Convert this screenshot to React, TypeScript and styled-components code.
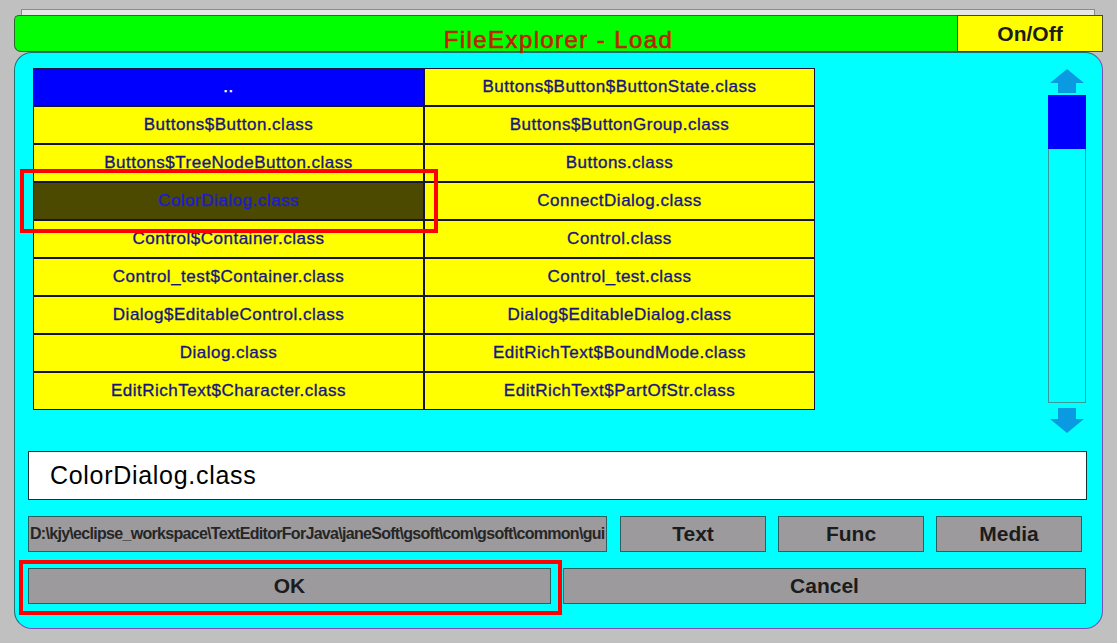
import React from "react";
import styled, { createGlobalStyle } from "styled-components";

const Global = createGlobalStyle`
  html, body {
    margin: 0;
    padding: 0;
    background: #c0c0c0;
    width: 1117px;
    height: 643px;
    overflow: hidden;
    font-family: "Liberation Sans", Arial, sans-serif;
  }
  * { box-sizing: border-box; }
`;

const Desktop = styled.div`
  width: 1117px;
  height: 643px;
  padding-top: 9px;
  display: flex;
  flex-direction: column;
`;

const BackWindowEdge = styled.div`
  margin-left: 21px;
  width: 1074px;
  height: 6px;
  background: #e6e6e6;
  border: 1px solid #8c8c8c;
  border-bottom: none;
`;

const Dialog = styled.div`
  margin-left: 14px;
  width: 1089px;
  display: flex;
  flex-direction: column;
`;

const TitleBar = styled.div`
  height: 37px;
  display: grid;
  grid-template-columns: 1fr 146px;
  grid-template-rows: 37px;
`;

const TitleGreen = styled.div`
  grid-column: 1;
  grid-row: 1;
  background: #00ff00;
  border: 1px solid #2a6a2a;
  border-right: none;
  border-radius: 5px 0 0 7px;
`;

const TitleText = styled.div`
  grid-column: 1 / -1;
  grid-row: 1;
  position: relative;
  z-index: 3;
  padding-top: 13px;
  text-align: center;
  font-size: 24px;
  line-height: 24px;
  letter-spacing: 1.4px;
  -webkit-text-stroke: 0.6px currentColor;
  color: #c02200;
  white-space: nowrap;
  pointer-events: none;
`;

const PowerToggle = styled.div`
  grid-column: 2;
  grid-row: 1;
  background: #ffff00;
  border: 1px solid #4a4a1a;
  display: flex;
  align-items: center;
  justify-content: center;
  font-weight: bold;
  font-size: 21px;
  color: #1c1c1c;
`;

const Panel = styled.div`
  height: 577px;
  background: #00ffff;
  border: 1px solid #1f7070;
  border-right-color: #7a50b0;
  border-bottom-color: #7a50b0;
  border-radius: 18px;
  padding: 15px 15px 24px 13px;
  display: flex;
  flex-direction: column;
`;

const TopSection = styled.div`
  height: 364px;
  display: flex;
  align-items: flex-start;
`;

const FileGrid = styled.div`
  margin-left: 5px;
  width: 782px;
  height: 342px;
  display: grid;
  grid-template-columns: 1fr 1fr;
  grid-auto-rows: 1fr;
  gap: 2px;
  padding: 1px;
  background: #14143c;
`;

type CellKind = "parent" | "selected" | "normal";

const Cell = styled.div<{ $kind: CellKind }>`
  position: relative;
  display: flex;
  align-items: center;
  justify-content: center;
  font-size: 17px;
  letter-spacing: 0.5px;
  -webkit-text-stroke: 0.35px currentColor;
  white-space: nowrap;
  background: ${(p) =>
    p.$kind === "parent" ? "#0000ff" : p.$kind === "selected" ? "#4b4a00" : "#ffff00"};
  color: ${(p) =>
    p.$kind === "parent" ? "#ffffff" : p.$kind === "selected" ? "#1c1cd0" : "#161682"};
`;

const FocusMark = styled.div<{ $t: number; $r: number; $b: number; $l: number }>`
  position: absolute;
  top: ${(p) => p.$t}px;
  right: ${(p) => p.$r}px;
  bottom: ${(p) => p.$b}px;
  left: ${(p) => p.$l}px;
  border: 4px solid #ff0000;
  z-index: 5;
  pointer-events: none;
`;

const ScrollCol = styled.div`
  margin-left: auto;
  margin-right: 1px;
  margin-top: 1px;
  width: 38px;
  display: flex;
  flex-direction: column;
  align-items: center;
`;

const ArrowIcon = styled.svg`
  display: block;
  width: 36px;
  height: 25px;
`;

const Track = styled.div`
  margin-top: 1px;
  width: 38px;
  height: 308px;
  border: 1px solid #3a9a9a;
  display: flex;
  flex-direction: column;
`;

const Thumb = styled.div`
  margin: -1px -1px 0 -1px;
  height: 54px;
  background: #0000ff;
`;

const DownWrap = styled.div`
  margin-top: 5px;
`;

const NameField = styled.div`
  margin-top: 19px;
  height: 49px;
  background: #ffffff;
  border: 1px solid #143232;
  padding-left: 21px;
  display: flex;
  align-items: center;
  font-size: 25px;
  letter-spacing: 0.7px;
  color: #000000;
`;

const ToolRow = styled.div`
  margin-top: 16px;
  height: 36px;
  display: grid;
  grid-template-columns: 580px 146px 146px 146px;
  column-gap: 12px;
  & > :first-child {
    margin-right: 1px;
  }
`;

const PathBox = styled.div`
  background: #9c9a9c;
  border: 1px solid #2a6060;
  display: flex;
  align-items: center;
  padding-left: 1px;
  overflow: hidden;
  white-space: nowrap;
  font-weight: bold;
  font-size: 16px;
  letter-spacing: -0.7px;
  color: #262626;
`;

const GrayButton = styled.div`
  position: relative;
  background: #9c9a9c;
  border: 1px solid #2a6060;
  display: flex;
  align-items: center;
  justify-content: center;
  font-weight: bold;
  font-size: 21px;
  color: #1c1c1c;
`;

const ActionRow = styled.div`
  margin-top: 16px;
  height: 36px;
  width: 1058px;
  display: grid;
  grid-template-columns: 1fr 1fr;
  column-gap: 12px;
`;

const UpArrow = () => (
  <ArrowIcon viewBox="0 0 36 25">
    <path d="M18 0 L35 14 L27 14 L27 24 L9 24 L9 14 L1 14 Z" fill="#0a9ae2" />
  </ArrowIcon>
);

const DownArrow = () => (
  <ArrowIcon viewBox="0 0 36 25">
    <path d="M9 0 L27 0 L27 11 L35 11 L18 25 L1 11 L9 11 Z" fill="#0a9ae2" />
  </ArrowIcon>
);

const files: [string, string][] = [
  ["..", "Buttons$Button$ButtonState.class"],
  ["Buttons$Button.class", "Buttons$ButtonGroup.class"],
  ["Buttons$TreeNodeButton.class", "Buttons.class"],
  ["ColorDialog.class", "ConnectDialog.class"],
  ["Control$Container.class", "Control.class"],
  ["Control_test$Container.class", "Control_test.class"],
  ["Dialog$EditableControl.class", "Dialog$EditableDialog.class"],
  ["Dialog.class", "EditRichText$BoundMode.class"],
  ["EditRichText$Character.class", "EditRichText$PartOfStr.class"],
];

const selected = "ColorDialog.class";

export default function App() {
  return (
    <>
      <Global />
      <Desktop>
        <BackWindowEdge />
        <Dialog>
          <TitleBar>
            <TitleGreen />
            <PowerToggle>On/Off</PowerToggle>
            <TitleText>FileExplorer - Load</TitleText>
          </TitleBar>
          <Panel>
            <TopSection>
              <FileGrid>
                {files.flat().map((name) => {
                  const kind: CellKind =
                    name === ".." ? "parent" : name === selected ? "selected" : "normal";
                  return (
                    <Cell key={name} $kind={kind}>
                      {name}
                      {kind === "selected" && <FocusMark $t={-14} $r={-15} $b={-14} $l={-14} />}
                    </Cell>
                  );
                })}
              </FileGrid>
              <ScrollCol>
                <UpArrow />
                <Track>
                  <Thumb />
                </Track>
                <DownWrap>
                  <DownArrow />
                </DownWrap>
              </ScrollCol>
            </TopSection>
            <NameField>ColorDialog.class</NameField>
            <ToolRow>
              <PathBox>D:\kjy\eclipse_workspace\TextEditorForJava\janeSoft\gsoft\com\gsoft\common\gui</PathBox>
              <GrayButton>Text</GrayButton>
              <GrayButton>Func</GrayButton>
              <GrayButton>Media</GrayButton>
            </ToolRow>
            <ActionRow>
              <GrayButton>
                OK
                <FocusMark $t={-9} $r={-12} $b={-12} $l={-10} />
              </GrayButton>
              <GrayButton>Cancel</GrayButton>
            </ActionRow>
          </Panel>
        </Dialog>
      </Desktop>
    </>
  );
}
